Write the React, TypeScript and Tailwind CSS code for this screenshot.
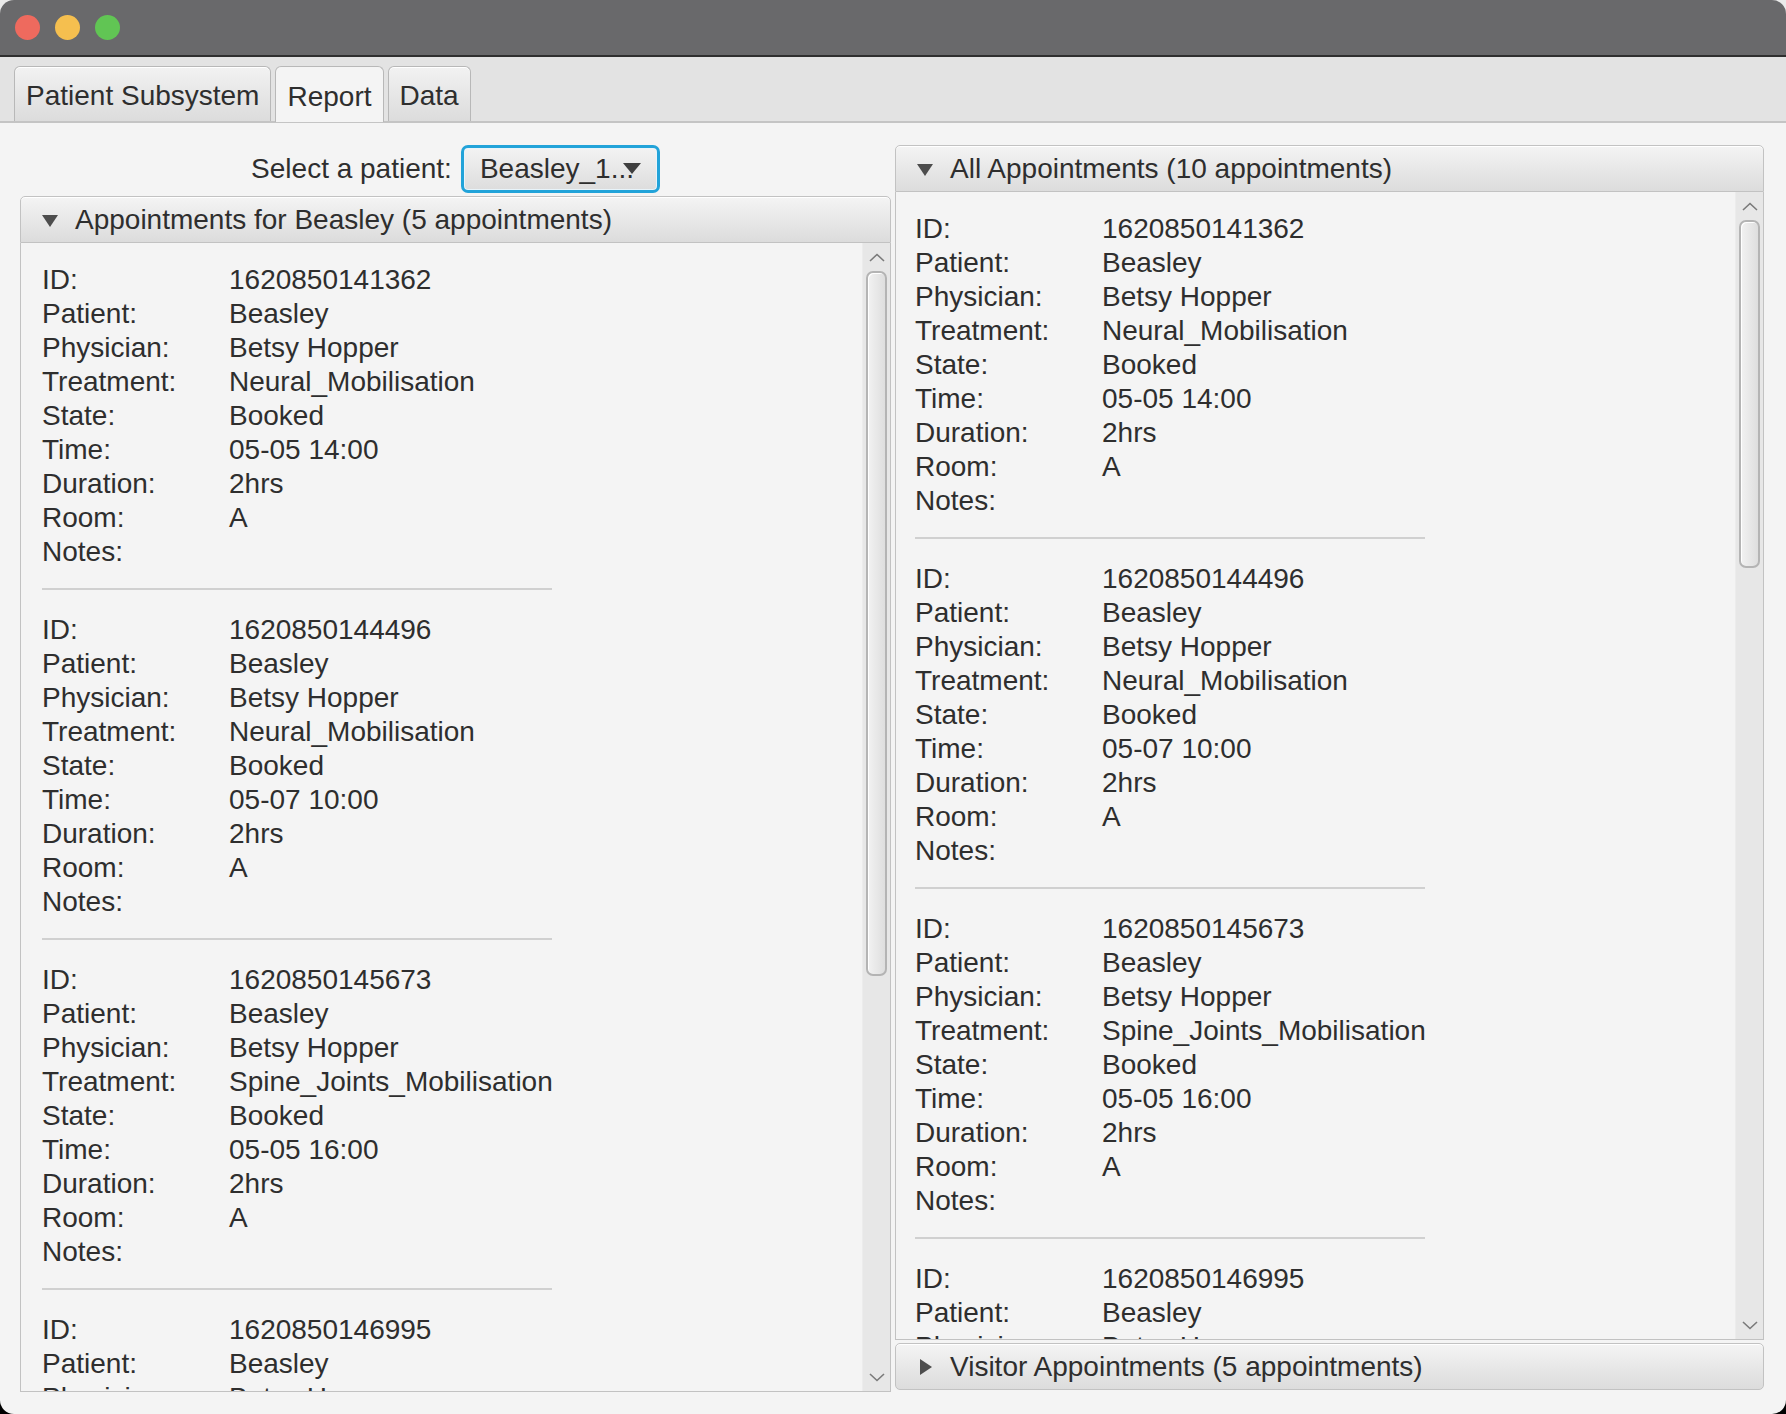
import React from "react";

type appointmentType = {
  id: string;
  patient: string;
  physician: string;
  treatment: string;
  state: string;
  time: string;
  duration: string;
  room: string;
  notes: string;
};

const beasley: appointmentType[] = [
  { id: "1620850141362", patient: "Beasley", physician: "Betsy Hopper", treatment: "Neural_Mobilisation", state: "Booked", time: "05-05 14:00", duration: "2hrs", room: "A", notes: "" },
  { id: "1620850144496", patient: "Beasley", physician: "Betsy Hopper", treatment: "Neural_Mobilisation", state: "Booked", time: "05-07 10:00", duration: "2hrs", room: "A", notes: "" },
  { id: "1620850145673", patient: "Beasley", physician: "Betsy Hopper", treatment: "Spine_Joints_Mobilisation", state: "Booked", time: "05-05 16:00", duration: "2hrs", room: "A", notes: "" },
  { id: "1620850146995", patient: "Beasley", physician: "Betsy Hopper", treatment: "Spine_Joints_Mobilisation", state: "Booked", time: "05-07 14:00", duration: "2hrs", room: "A", notes: "" },
  { id: "1620850148120", patient: "Beasley", physician: "Betsy Hopper", treatment: "Neural_Mobilisation", state: "Booked", time: "05-12 10:00", duration: "2hrs", room: "A", notes: "" },
];

const font = { fontFamily: '"Liberation Sans", Arial, sans-serif' };

function AppointmentList({ items, inset }: { items: appointmentType[]; inset: string }) {
  return (
    <div className={"flex-1 overflow-hidden pt-[20px] " + inset}>
      {items.map((a, i) => {
        const rows: [string, string][] = [
          ["ID:", a.id],
          ["Patient:", a.patient],
          ["Physician:", a.physician],
          ["Treatment:", a.treatment],
          ["State:", a.state],
          ["Time:", a.time],
          ["Duration:", a.duration],
          ["Room:", a.room],
          ["Notes:", a.notes],
        ];
        return (
          <div key={a.id + i}>
            <div className="flex flex-col">
              {rows.map(([label, value]) => (
                <div key={label} className="flex h-[34px] items-center whitespace-nowrap">
                  <span className="w-[187px] shrink-0">{label}</span>
                  <span>{value}</span>
                </div>
              ))}
            </div>
            <div className="mt-[19px] mb-[23px] h-[2px] w-[510px] bg-[#d0d0d0]" />
          </div>
        );
      })}
    </div>
  );
}

function Chevron({ up }: { up?: boolean }) {
  return (
    <svg width="16" height="9" viewBox="0 0 16 9">
      <polyline
        points={up ? "1,8 8,1.5 15,8" : "1,1 8,7.5 15,1"}
        fill="none"
        stroke="#7a7a7a"
        strokeWidth="1.6"
      />
    </svg>
  );
}

function ScrollBar({ thumb }: { thumb: number }) {
  return (
    <div className="flex w-[28px] shrink-0 flex-col items-center bg-[#e7e7e7] border-l border-[#ececec]">
      <div className="flex h-[28px] items-center justify-center">
        <Chevron up />
      </div>
      <div
        className="w-[21px] rounded-[7px] border-2 border-[#b4b4b4] bg-gradient-to-r from-[#f2f2f2] to-[#dedede] shadow-[inset_1px_1px_0_#ffffff]"
        style={{ height: thumb }}
      />
      <div className="flex-1" />
      <div className="flex h-[28px] items-center justify-center">
        <Chevron />
      </div>
    </div>
  );
}

function PaneHeader({ title, open, rounded }: { title: string; open: boolean; rounded?: boolean }) {
  return (
    <div
      className={
        "flex h-[47px] shrink-0 items-center border border-[#c2c2c2] bg-gradient-to-b from-[#f4f4f4] to-[#dcdcdc] pl-[21px] text-[28px] text-[#2e2e2e] shadow-[inset_0_1px_0_#ffffff] " +
        (rounded ? "rounded-[5px]" : "rounded-t-[5px]")
      }
    >
      <svg width="16" height="16" viewBox="0 0 16 16" className="shrink-0">
        {open ? <polygon points="0,3 16,3 8,15" fill="#4d4d4d" /> : <polygon points="3,0 15,8 3,16" fill="#4d4d4d" />}
      </svg>
      <span className="ml-[17px] whitespace-nowrap">{title}</span>
    </div>
  );
}

function Tab({ label, selected }: { label: string; selected?: boolean }) {
  return (
    <div
      className={
        "flex h-[55px] items-center rounded-t-[6px] border border-b-0 border-[#b8b8b8] px-[11px] pt-[4px] " +
        (selected
          ? "bg-[#f4f4f4] h-[56px] -mb-[1px]"
          : "bg-gradient-to-b from-[#f2f2f2] to-[#dcdcdc] shadow-[inset_0_1px_0_#ffffff]")
      }
    >
      {label}
    </div>
  );
}

export default function App() {
  const all = [...beasley, ...beasley];
  return (
    <div className="h-[1414px] w-[1786px] bg-[linear-gradient(to_bottom,#eaeaea_50%,#000000_50%)]" style={font}>
      <div className="flex h-full flex-col overflow-hidden rounded-[14px] bg-[#f4f4f4] text-[28px] text-[#2e2e2e]">
        {/* title bar */}
        <div className="flex h-[57px] shrink-0 items-center gap-[15px] border-b-2 border-[#2f2f2f] bg-[#69696b] pl-[15px]">
          <div className="h-[25px] w-[25px] rounded-full bg-[#ee6a5e]" />
          <div className="h-[25px] w-[25px] rounded-full bg-[#f5bf4f]" />
          <div className="h-[25px] w-[25px] rounded-full bg-[#61c554]" />
        </div>

        {/* tab bar */}
        <div className="flex h-[66px] shrink-0 items-end gap-[4px] border-b-2 border-[#c4c4c4] bg-[#e3e3e3] pl-[14px]">
          <Tab label="Patient Subsystem" />
          <Tab label="Report" selected />
          <Tab label="Data" />
        </div>

        {/* content */}
        <div className="flex min-h-0 flex-1 gap-[4px] pl-[20px] pr-[22px] pt-[22px] pb-[22px]">
          {/* left */}
          <div className="flex w-[871px] shrink-0 flex-col">
            <div className="flex h-[48px] shrink-0 items-center justify-center gap-[9px]">
              <span>Select a patient:</span>
              <div className="relative flex h-[48px] w-[199px] items-center rounded-[7px] border-[3px] border-[#22a3d9] bg-gradient-to-b from-[#f3f3f3] to-[#dddddd] pl-[16px] shadow-[inset_0_0_0_1px_#e8f4fa]">
                <span className="whitespace-nowrap">Beasley_1...</span>
                <svg width="18" height="11" viewBox="0 0 18 11" className="absolute right-[16px] top-[15px]">
                  <polygon points="0,0 18,0 9,11" fill="#3f3f3f" />
                </svg>
              </div>
            </div>
            <div className="mt-[3px] flex min-h-0 flex-1 flex-col">
              <PaneHeader title="Appointments for Beasley (5 appointments)" open />
              <div className="flex min-h-0 flex-1 border border-t-0 border-[#c2c2c2]">
                <AppointmentList items={beasley} inset="pl-[21px]" />
                <ScrollBar thumb={705} />
              </div>
            </div>
          </div>

          {/* right */}
          <div className="flex min-w-0 flex-1 flex-col pb-[2px]">
            <PaneHeader title="All Appointments (10 appointments)" open />
            <div className="flex min-h-0 flex-1 border border-t-0 border-[#c2c2c2]">
              <AppointmentList items={all} inset="pl-[19px]" />
              <ScrollBar thumb={348} />
            </div>
            <div className="mt-[3px]">
              <PaneHeader title="Visitor Appointments (5 appointments)" open={false} rounded />
            </div>
          </div>
        </div>
      </div>
    </div>
  );
}
